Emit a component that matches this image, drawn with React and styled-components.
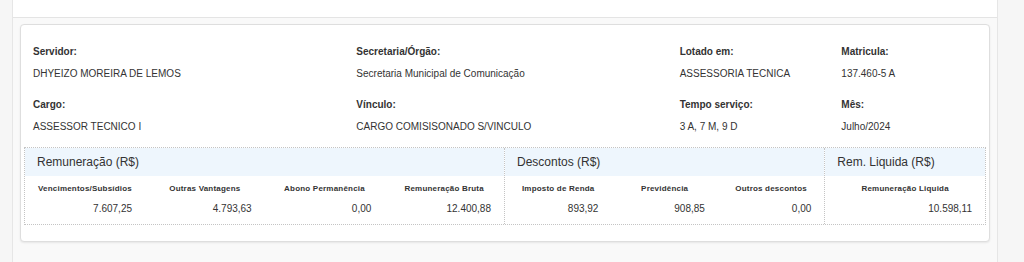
import React from 'react';
import styled, { createGlobalStyle } from 'styled-components';

const GlobalStyle = createGlobalStyle`
  body {
    margin: 0;
    background: #f6f6f6;
    font-family: 'Liberation Sans', Arial, sans-serif;
    color: #333;
  }
`;

const info = [
  { label: 'Servidor:', value: 'DHYEIZO MOREIRA DE LEMOS', span: 4 },
  { label: 'Secretaria/Órgão:', value: 'Secretaria Municipal de Comunicação', span: 4 },
  { label: 'Lotado em:', value: 'ASSESSORIA TECNICA', span: 2 },
  { label: 'Matricula:', value: '137.460-5 A', span: 2 },
  { label: 'Cargo:', value: 'ASSESSOR TECNICO I', span: 4 },
  { label: 'Vínculo:', value: 'CARGO COMISISONADO S/VINCULO', span: 4 },
  { label: 'Tempo serviço:', value: '3 A, 7 M, 9 D', span: 2 },
  { label: 'Mês:', value: 'Julho/2024', span: 2 },
];

const sections = [
  {
    title: 'Remuneração (R$)',
    size: 6,
    items: [
      { label: 'Vencimentos/Subsídios', value: '7.607,25' },
      { label: 'Outras Vantagens', value: '4.793,63' },
      { label: 'Abono Permanência', value: '0,00' },
      { label: 'Remuneração Bruta', value: '12.400,88' },
    ],
  },
  {
    title: 'Descontos (R$)',
    size: 4,
    items: [
      { label: 'Imposto de Renda', value: '893,92' },
      { label: 'Previdência', value: '908,85' },
      { label: 'Outros descontos', value: '0,00' },
    ],
  },
  {
    title: 'Rem. Liquida (R$)',
    size: 2,
    items: [{ label: 'Remuneração Liquida', value: '10.598,11' }],
  },
];

const App = () => {
  return (
    <>
      <GlobalStyle />
      <StyledPage>
        <StyledTopBar />
        <StyledCard>
          <StyledInfoGrid>
            {info.map(item => (
              <StyledField key={item.label} span={item.span}>
                <StyledLabel>{item.label}</StyledLabel>
                <StyledValue>{item.value}</StyledValue>
              </StyledField>
            ))}
          </StyledInfoGrid>
          <StyledTable>
            {sections.map(section => (
              <StyledSection key={section.title} size={section.size}>
                <StyledSectionHead>{section.title}</StyledSectionHead>
                <StyledSectionBody>
                  {section.items.map(item => (
                    <StyledCell key={item.label}>
                      <StyledCellLabel>{item.label}</StyledCellLabel>
                      <StyledCellValue>{item.value}</StyledCellValue>
                    </StyledCell>
                  ))}
                </StyledSectionBody>
              </StyledSection>
            ))}
          </StyledTable>
        </StyledCard>
      </StyledPage>
    </>
  );
};

const StyledPage = styled.div`
  margin-left: 12px;
  width: 986px;
  min-height: 262px;
  background: #f9f9f9;
  border-left: 1px solid #e6e6e6;
  border-right: 1px solid #e6e6e6;
  box-sizing: border-box;
  padding-bottom: 20px;
`;

const StyledTopBar = styled.div`
  height: 17px;
  background: #fff;
  border-bottom: 1px solid #e4e4e4;
`;

const StyledCard = styled.div`
  margin: 6px 7px 0 7px;
  background: #fff;
  border: 1px solid #dedede;
  border-radius: 4px;
  box-shadow: 0 1px 2px rgba(0, 0, 0, 0.08);
  padding: 20px 3px 16px 3px;
`;

const StyledInfoGrid = styled.div`
  display: grid;
  grid-template-columns: repeat(12, 1fr);
  row-gap: 18px;
  margin: 0 -4px;
`;

const StyledField = styled.div`
  grid-column: span ${props => props.span};
  padding-left: 13px;
`;

const StyledLabel = styled.div`
  font-size: 10px;
  line-height: 13px;
  font-weight: bold;
  color: #333;
`;

const StyledValue = styled.div`
  margin-top: 9px;
  font-size: 10px;
  line-height: 13px;
  color: #333;
`;

const StyledTable = styled.div`
  display: flex;
  margin-top: 14px;
  border: 1px dotted #c4c4c4;
`;

const StyledSection = styled.div`
  flex: ${props => props.size};
  display: flex;
  flex-direction: column;
  & + & {
    border-left: 1px dotted #c4c4c4;
  }
`;

const StyledSectionHead = styled.div`
  background: #eef6fd;
  height: 28px;
  line-height: 28px;
  padding-left: 12px;
  font-size: 12px;
  color: #333;
`;

const StyledSectionBody = styled.div`
  display: flex;
  padding: 7px 0 9px 0;
`;

const StyledCell = styled.div`
  flex: 1;
  padding: 0 13px;
  display: flex;
  flex-direction: column;
`;

const StyledCellLabel = styled.div`
  text-align: center;
  font-size: 8px;
  letter-spacing: 0.2px;
  line-height: 12px;
  font-weight: bold;
  color: #333;
  white-space: nowrap;
`;

const StyledCellValue = styled.div`
  margin-top: 8px;
  text-align: right;
  font-size: 10px;
  line-height: 12px;
  color: #333;
`;

export default App;
